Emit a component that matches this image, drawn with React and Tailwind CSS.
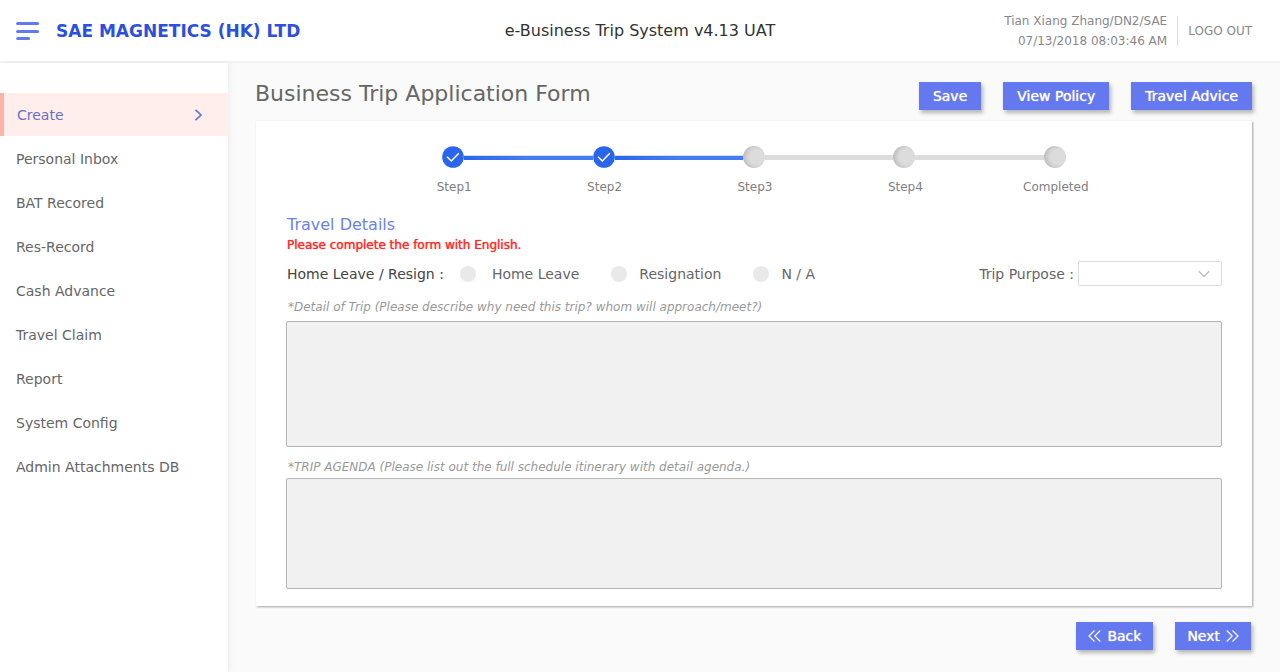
import React from "react";

const NAV_ITEMS = [
  "Personal Inbox",
  "BAT Recored",
  "Res-Record",
  "Cash Advance",
  "Travel Claim",
  "Report",
  "System Config",
  "Admin Attachments DB",
];

const STEPS = [
  { label: "Step1", done: true },
  { label: "Step2", done: true },
  { label: "Step3", done: false },
  { label: "Step4", done: false },
  { label: "Completed", done: false },
];

const LEAVE_OPTIONS = [
  { label: "Home Leave", spacing: "gap-4" },
  { label: "Resignation", spacing: "gap-3" },
  { label: "N / A", spacing: "gap-3" },
];

function Header() {
  return (
    <header className="grid h-[63px] shrink-0 grid-cols-[1fr_auto_1fr] items-center border-b-2 border-[#f2f2f2] bg-white px-4">
      <div className="flex items-center gap-4">
        <button type="button" aria-label="Toggle menu">
          <svg width="24" height="20" viewBox="0 0 24 20" fill="none" stroke="#6478f0" strokeWidth="3" strokeLinecap="round">
            <path d="M1.6 2.5H21.6M1.6 10.5H21.6M1.6 17.5H12.6" />
          </svg>
        </button>
        <span className="text-[17px] leading-6 font-bold whitespace-nowrap text-[#2c50dc]">SAE MAGNETICS (HK) LTD</span>
      </div>
      <h1 className="text-base text-[#333333]">e-Business Trip System v4.13 UAT</h1>
      <div className="flex items-center justify-end pr-3 text-xs text-[#888888]">
        <p className="pr-[10px] text-right leading-5">
          Tian Xiang Zhang/DN2/SAE
          <br />
          07/13/2018 08:03:46 AM
        </p>
        <a href="#logout" className="border-l border-[#dddddd] pl-[10px] leading-[30px]">
          LOGO OUT
        </a>
      </div>
    </header>
  );
}

function Sidebar() {
  return (
    <nav className="w-[228px] shrink-0 bg-white pt-[30px] text-sm text-[#666666] shadow-[2px_0_5px_rgba(0,0,0,0.05)]">
      <ul className="flex flex-col gap-px">
        <li>
          <a href="#create" aria-current="page" className="flex h-[43px] items-center justify-between border-l-4 border-[#ffb3a7] bg-[#ffeeec] pr-[25px] pl-[13px] text-[#6670c8]">
            Create
            <svg width="9" height="12" viewBox="0 0 9 12" fill="none" stroke="#6074d8" strokeWidth="1.7">
              <path d="M1.5 0.8L7 6L1.5 11.2" />
            </svg>
          </a>
        </li>
        {NAV_ITEMS.map((item) => (
          <li key={item}>
            <a href="#menu" className="flex h-[43px] items-center pl-4">
              {item}
            </a>
          </li>
        ))}
      </ul>
    </nav>
  );
}

function ActionButton({ padding = "px-[14px]", children }) {
  return (
    <button
      type="button"
      className={
        "flex h-7 items-center gap-[6px] bg-[#6478f0] text-sm text-white shadow-[2px_3px_4px_rgba(0,0,0,0.28)] [text-shadow:0_0_1px_#ffffff] " + padding
      }
    >
      {children}
    </button>
  );
}

function Line({ kind }) {
  if (kind === "none") return <span className="h-[5px] flex-1" />;
  if (kind === "start") return <span className="h-[5px] flex-1 border-t border-[#dcdcdc] bg-linear-to-r from-[#2a66ec] to-[#447bf6]" />;
  if (kind === "end") return <span className="h-[5px] flex-1 border-t border-[#dcdcdc] bg-[#447bf6]" />;
  return <span className="h-[5px] flex-1 bg-[#dcdcdc]" />;
}

function Stepper() {
  return (
    <ol className="mx-auto grid w-full max-w-[752px] grid-cols-5">
      {STEPS.map((step, i) => (
        <li key={step.label} className="flex flex-col items-center">
          <div className="flex w-full items-center">
            <Line kind={i === 0 ? "none" : STEPS[i - 1].done ? "end" : "todo"} />
            {step.done ? (
              <svg width="22" height="22" viewBox="0 0 22 22" fill="none">
                <circle cx="11" cy="11" r="10.8" fill="#2a66ec" />
                <path d="M5 10.8L9.3 15L16.8 7.3" stroke="#ffffff" strokeWidth="1.5" />
              </svg>
            ) : (
              <span className="size-[22px] rounded-full bg-[#dcdcdc] shadow-[inset_3px_0_4px_rgba(0,0,0,0.14)]" />
            )}
            <Line kind={i === STEPS.length - 1 ? "none" : step.done ? "start" : "todo"} />
          </div>
          <span className="mt-[11px] pl-[2px] text-xs leading-4 text-[#808080]">{step.label}</span>
        </li>
      ))}
    </ol>
  );
}

function TripForm() {
  return (
    <form className="mt-[11px] ml-px bg-white px-[30px] pt-[25px] pb-[17px] shadow-[1px_1px_2px_rgba(0,0,0,0.35)]">
      <Stepper />
      <h3 className="mt-5 pl-px text-base leading-5 text-[#6b82e8]">Travel Details</h3>
      <p className="pl-px text-xs leading-5 text-[#ff2b2b] [text-shadow:0_0_1px_#ff2b2b]">Please complete the form with English.</p>

      <div className="mt-[6px] flex items-center justify-between pl-px text-sm text-[#666666]">
        <fieldset className="flex items-center gap-8">
          <legend className="float-left -mr-4 text-[#444444]">Home Leave / Resign :</legend>
          {LEAVE_OPTIONS.map((option) => (
            <label key={option.label} className={"flex items-center " + option.spacing}>
              <input type="radio" name="leave" className="size-4 appearance-none rounded-full bg-[#e9e9e9] checked:bg-[#2a66ec]" />
              {option.label}
            </label>
          ))}
        </fieldset>
        <div className="flex items-center gap-1">
          <label htmlFor="purpose">Trip Purpose :</label>
          <div className="grid w-36 items-center">
            <select id="purpose" defaultValue="" className="col-start-1 row-start-1 h-[25px] w-full appearance-none rounded-xs border border-[#dcdcdc] bg-white">
              <option value=""></option>
            </select>
            <svg className="pointer-events-none col-start-1 row-start-1 mr-3 justify-self-end" width="12" height="8" viewBox="0 0 12 8" fill="none" stroke="#bdbdbd" strokeWidth="1.4">
              <path d="M0.8 1.2L6 6.6L11.2 1.2" />
            </svg>
          </div>
        </div>
      </div>

      <label htmlFor="detail" className="mt-3 block pl-[2px] text-xs leading-[18px] text-[#999999] italic">
        *Detail of Trip (Please describe why need this trip? whom will approach/meet?)
      </label>
      <textarea id="detail" className="mt-[5px] block h-[126px] w-full resize-none rounded-xs border border-[#b5b5b5] bg-[#f1f1f1]" />
      <label htmlFor="agenda" className="mt-[11px] block pl-[2px] text-xs leading-[18px] text-[#999999] italic">
        *TRIP AGENDA (Please list out the full schedule itinerary with detail agenda.)
      </label>
      <textarea id="agenda" className="mt-[2px] block h-[111px] w-full resize-none rounded-xs border border-[#b5b5b5] bg-[#f1f1f1]" />
    </form>
  );
}

export default function App() {
  return (
    <div className="flex min-h-screen flex-col bg-[#fafafa] font-['DejaVu_Sans',Verdana,sans-serif]">
      <Header />
      <div className="flex flex-1">
        <Sidebar />
        <main className="min-w-0 flex-1 pt-[15px] pr-7 pl-[27px]">
          <div className="flex items-center justify-between">
            <h2 className="text-[22px] leading-8 text-[#666666]">Business Trip Application Form</h2>
            <div className="flex gap-[22px] pt-1">
              <ActionButton>Save</ActionButton>
              <ActionButton>View Policy</ActionButton>
              <ActionButton>Travel Advice</ActionButton>
            </div>
          </div>
          <TripForm />
          <div className="mt-4 flex justify-end gap-[22px] pr-px">
            <ActionButton padding="px-3">
              <svg width="13" height="12" viewBox="0 0 13 12" fill="none" stroke="#ffffff" strokeWidth="1.1">
                <path d="M6.5 0.5L1 6L6.5 11.5M12.3 0.5L6.8 6L12.3 11.5" />
              </svg>
              Back
            </ActionButton>
            <ActionButton padding="px-3">
              Next
              <svg width="13" height="12" viewBox="0 0 13 12" fill="none" stroke="#ffffff" strokeWidth="1.1">
                <path d="M0.7 0.5L6.2 6L0.7 11.5M6.5 0.5L12 6L6.5 11.5" />
              </svg>
            </ActionButton>
          </div>
        </main>
      </div>
    </div>
  );
}
